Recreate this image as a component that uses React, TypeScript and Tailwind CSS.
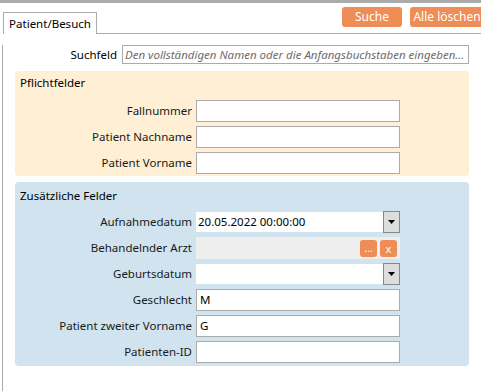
import React from "react";

const font = { fontFamily: '"Noto Sans", "Liberation Sans", sans-serif' };

function Arrow() {
  return (
    <svg width="9" height="6" viewBox="0 0 9 6">
      <path d="M1 1 L8 1 L4.5 5 Z" fill="#000" />
    </svg>
  );
}

function Row({ label, children }: { label: string; children: React.ReactNode }) {
  return (
    <div className="flex items-center h-[22px]">
      <div className="w-[177px] text-right pr-[4px] text-[11.5px] text-[#1a1a1a] whitespace-nowrap">{label}</div>
      {children}
    </div>
  );
}

function TextBox({ value = "" }: { value?: string }) {
  return (
    <div className="w-[204px] h-[22px] bg-white border border-[#ababab] flex items-center px-[3px] text-[11.5px] text-black">
      {value}
    </div>
  );
}

function DateBox({ value = "" }: { value?: string }) {
  return (
    <div className="w-[204px] h-[22px] flex">
      <div className="flex-1 h-[20px] mt-[1px] bg-white flex items-center px-[2px] text-[11.5px] text-black">{value}</div>
      <div className="w-[17px] h-[22px] bg-[#dddddd] border border-[#888] flex items-center justify-center">
        <Arrow />
      </div>
    </div>
  );
}

export default function App() {
  return (
    <div className="w-[481px] h-[391px] bg-white relative overflow-hidden" style={font}>
      <div className="h-[3px] bg-[#ababab]" />
      <div className="flex items-end h-[31px]">
        <div className="ml-[3px] w-[94px] h-[22px] border border-b-0 border-[#ababab] bg-white flex items-center justify-center text-[11.5px] text-black">
          Patient/Besuch
        </div>
        <div className="flex-1 border-b border-[#ababab]" />
      </div>
      <div className="absolute top-[7px] left-[342px] flex gap-[8px]">
        <div className="w-[60px] h-[20px] rounded-[3px] bg-[#ee8d55] text-white text-[12px] flex items-center justify-center">Suche</div>
        <div className="w-[74px] h-[20px] rounded-[3px] bg-[#ee8d55] text-white text-[12px] flex items-center justify-center whitespace-nowrap">Alle löschen</div>
      </div>
      <div className="ml-[2px] border-l border-[#ababab] h-[357px] pl-[12px]">
        <div className="flex items-center h-[19px] mt-[11px]">
          <div className="w-[107px] text-right pr-[5px] text-[11.5px] text-black">Suchfeld</div>
          <div className="w-[347px] h-[19px] border border-[#ababab] flex items-center px-[2px] text-[11.5px] italic text-[#6d6d6d] whitespace-nowrap overflow-hidden">
            Den vollständigen Namen oder die Anfangsbuchstaben eingeben...
          </div>
        </div>
        <div className="mt-[7px] w-[454px] h-[105px] bg-[#ffefd5] rounded-[4px] pl-[4px] pt-[4px]">
          <div className="text-[11.5px] h-[16px] leading-[16px] text-black ml-[1px]">Pflichtfelder</div>
          <div className="mt-[9px] flex flex-col gap-[4px]">
            <Row label="Fallnummer"><TextBox /></Row>
            <Row label="Patient Nachname"><TextBox /></Row>
            <Row label="Patient Vorname"><TextBox /></Row>
          </div>
        </div>
        <div className="mt-[6px] w-[454px] h-[184px] bg-[#d0e3ee] rounded-[4px] pl-[4px] pt-[6px]">
          <div className="text-[11.5px] h-[16px] leading-[16px] text-black ml-[1px]">Zusätzliche Felder</div>
          <div className="mt-[7px] flex flex-col gap-[4px]">
            <Row label="Aufnahmedatum"><DateBox value="20.05.2022 00:00:00" /></Row>
            <Row label="Behandelnder Arzt">
              <div className="w-[204px] h-[22px] bg-[#eeeeee] flex items-center justify-end pr-[3px] gap-[3px]">
                <div className="w-[17px] h-[17px] rounded-[3px] bg-[#ee8d55] text-white text-[10px] flex items-center justify-center leading-none">...</div>
                <div className="w-[17px] h-[17px] rounded-[3px] bg-[#ee8d55] text-white text-[11px] flex items-center justify-center leading-none">x</div>
              </div>
            </Row>
            <Row label="Geburtsdatum"><DateBox /></Row>
            <Row label="Geschlecht"><TextBox value="M" /></Row>
            <Row label="Patient zweiter Vorname"><TextBox value="G" /></Row>
            <Row label="Patienten-ID"><TextBox /></Row>
          </div>
        </div>
      </div>
    </div>
  );
}
